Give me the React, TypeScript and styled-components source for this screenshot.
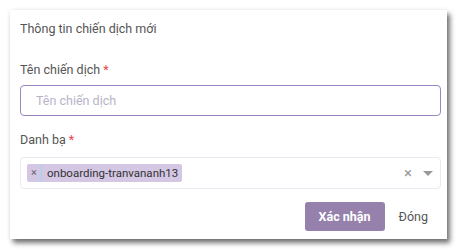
import styled, { createGlobalStyle } from 'styled-components';

const GlobalStyle = createGlobalStyle`
  html, body {
    margin: 0;
    padding: 0;
    background: #fff;
    font-family: Roboto, "Noto Sans", Arial, sans-serif;
  }
`;

const Page = styled.div`
  padding: 10px 0 0 10px;
  width: 459px;
  height: 251px;
  box-sizing: border-box;
`;

const Modal = styled.div`
  width: 437px;
  height: 229px;
  box-sizing: border-box;
  background: #fff;
  padding: 10px 6px 0 10px;
  box-shadow: 3px 4px 5px rgba(0, 0, 0, 0.55), 0 0 4px rgba(0, 0, 0, 0.08);
  display: flex;
  flex-direction: column;
`;

const Title = styled.div`
  font-size: 12.5px;
  line-height: 18px;
  color: #555;
  height: 18px;
  margin-bottom: 23px;
`;

const Label = styled.div`
  font-size: 12.5px;
  line-height: 18px;
  color: #555;
  margin-bottom: 6px;
`;

const Star = styled.span`
  color: #e5484d;
`;

const Input = styled.input`
  box-sizing: border-box;
  width: 421px;
  height: 31px;
  border: 1px solid #9b86c2;
  border-radius: 4px;
  padding: 0 12px 0 15px;
  font-family: inherit;
  font-size: 12.5px;
  color: #444;
  outline: none;
  margin-bottom: 15px;
  &::placeholder {
    color: #b7b3c9;
  }
`;

const Select = styled.div`
  box-sizing: border-box;
  width: 421px;
  height: 32px;
  margin-top: 2px;
  border: 1px solid #ebe9f1;
  border-radius: 4px;
  display: flex;
  align-items: center;
  padding: 0 7px 0 6px;
`;

const Tag = styled.div`
  display: flex;
  align-items: center;
  height: 18px;
  background: #d4c7e4;
  border-radius: 2px;
  font-size: 11.5px;
  color: #333;
`;

const TagRemove = styled.span`
  width: 14px;
  text-align: center;
  font-size: 11px;
  color: #666;
  border-right: 1px solid #9fd4f2;
  height: 18px;
  line-height: 18px;
`;

const TagText = styled.span`
  padding: 0 4px 0 5px;
  line-height: 18px;
`;

const Spacer = styled.div`
  flex: 1;
`;

const Clear = styled.span`
  color: #999;
  font-size: 15px;
  margin-right: 11px;
`;

const Caret = styled.span`
  width: 0;
  height: 0;
  border-left: 5px solid transparent;
  border-right: 5px solid transparent;
  border-top: 5px solid #999;
`;

const Footer = styled.div`
  display: flex;
  justify-content: flex-end;
  align-items: center;
  margin-top: 13px;
  padding-right: 13px;
  gap: 14px;
`;

const Primary = styled.button`
  height: 29px;
  width: 80px;
  border: none;
  border-radius: 3px;
  background: #9581ac;
  color: #fff;
  font-family: inherit;
  font-size: 12.5px;
  font-weight: 700;
`;

const Secondary = styled.span`
  font-size: 12.5px;
  color: #555;
`;

export default function App() {
  return (
    <Page>
      <GlobalStyle />
      <Modal>
        <Title>Thông tin chiến dịch mới</Title>
        <Label>
          Tên chiến dịch <Star>*</Star>
        </Label>
        <Input placeholder="Tên chiến dịch" />
        <Label>
          Danh bạ <Star>*</Star>
        </Label>
        <Select>
          <Tag>
            <TagRemove>×</TagRemove>
            <TagText>onboarding-tranvananh13</TagText>
          </Tag>
          <Spacer />
          <Clear>×</Clear>
          <Caret />
        </Select>
        <Footer>
          <Primary>Xác nhận</Primary>
          <Secondary>Đóng</Secondary>
        </Footer>
      </Modal>
    </Page>
  );
}
